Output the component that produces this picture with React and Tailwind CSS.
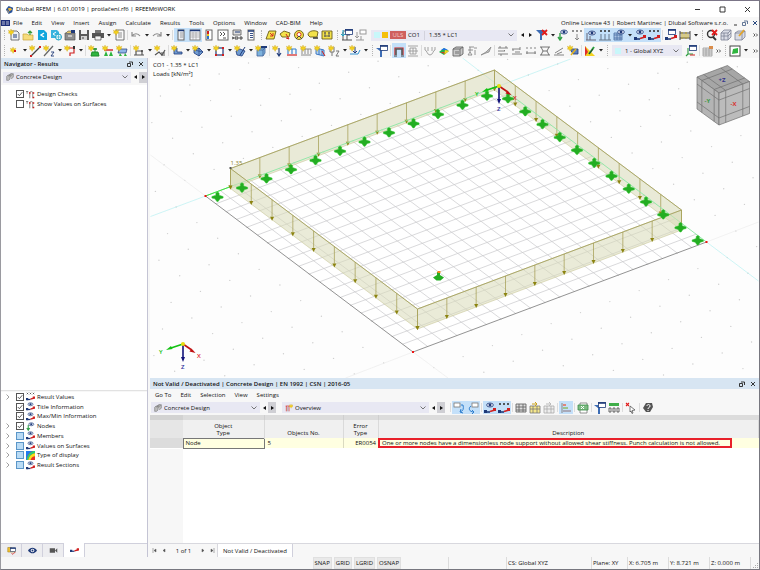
import clsx from "clsx";

const NAVY = "#1f3a78";
const RED = "#d02020";

/* ---------- Small glyph parts shared by the icons ---------- */

function Star({ x = 3, y = 3 }) {
  return (
    <path
      d={`M${x} ${y - 3}l.8 2.1 2.1-.9-.9 2 .9 .8-1.9.4-.9 2-.9-2-2-.4 1-.8-.9-2 2 .9z`}
      fill="#f4d21f"
      stroke="#c59a10"
      strokeWidth=".3"
    />
  );
}

function Eye({ x = 7, y = 3 }) {
  return (
    <g>
      <ellipse cx={x} cy={y} rx="3.4" ry="2" fill="#dfe6f5" stroke={NAVY} strokeWidth=".8" />
      <circle cx={x} cy={y} r="1.4" fill={NAVY} />
    </g>
  );
}

function Beam({ y = 9 }) {
  return (
    <g>
      <path d={`M1 ${y + 1}H6`} stroke={NAVY} strokeWidth="1.6" />
      <path d={`M6 ${y + 0.5}L11 ${y - 1}`} stroke={RED} strokeWidth="1.8" />
      <path d={`M0 ${y - 1}h3v3H0z`} fill={NAVY} />
      <path d={`M9 ${y - 3}h3v3H9z`} fill={RED} />
    </g>
  );
}

function Xxx({ y = 2, color = "#333" }) {
  return (
    <path
      d={`M1 ${y}l2 2m0-2l-2 2M5 ${y}l2 2m0-2l-2 2M9 ${y}l2 2m0-2l-2 2`}
      stroke={color}
      strokeWidth=".8"
    />
  );
}

function Window({ x = 4, y = 0 }) {
  return (
    <g>
      <rect x={x + 0.4} y={y + 0.4} width="7" height="5" fill="#fff" stroke={NAVY} strokeWidth=".8" />
      <path d={`M${x} ${y + 1}h7.8`} stroke={NAVY} strokeWidth="1.6" />
    </g>
  );
}

const ICONS = {
  newDoc: (
    <>
      <path d="M3 2h6l2 2v7H3z" fill="#eef1f5" stroke="#555" strokeWidth=".8" />
      <path d="M5 6h4M5 8h4" stroke={NAVY} />
      <Star />
    </>
  ),
  open: (
    <>
      <path d="M1 5h4l1 1h5v5H1z" fill="#f6dc7c" stroke="#c9a53a" strokeWidth=".7" />
      <path d="M8 6V2M6 4l2-2 2 2" stroke="#3b9b3b" strokeWidth="1.2" fill="none" />
    </>
  ),
  cloud: (
    <>
      <path d="M2 1h6l3 3v7H2z" fill="#12a5dc" />
      <path d="M8 4L5 6l3 2" stroke="#fff" strokeWidth="1.4" fill="none" />
    </>
  ),
  cloudGlobe: (
    <>
      <path d="M1 1h6l2 2v6H1z" fill="#38b3df" />
      <path d="M6 3L3 5l3 2" stroke="#fff" fill="none" />
      <circle cx="8.5" cy="8" r="3" fill="#e6f8fd" stroke="#1ba3c6" />
      <path d="M6 8h5M8.5 5v6" stroke="#1ba3c6" strokeWidth=".6" />
    </>
  ),
  archive: (
    <>
      <path d="M1 4h10v7H1z" fill="#8d8d8d" stroke="#555" strokeWidth=".7" />
      <path d="M2 4l2-2h5l2 2" fill="#e3c56a" stroke="#555" strokeWidth=".6" />
      <path d="M7 1h4v3H7z" fill={NAVY} />
      <path d="M4 7h4" stroke="#fff" />
    </>
  ),
  save: (
    <>
      <path d="M1 1h10v10H1z" fill="#5a5a5a" />
      <path d="M3 1h6v4H3z" fill="#f2f2f2" />
      <path d="M3 7h6v4H3z" fill="#d4d4d4" />
      <path d="M5 8v2" stroke="#444" />
    </>
  ),
  print: (
    <>
      <path d="M3 1h6v3H3z" fill="#777" />
      <path d="M0 4h12v5H0z" fill="#555" />
      <path d="M3 7h6v4H3z" fill="#f4f4f4" stroke="#444" strokeWidth=".7" />
    </>
  ),
  report: (
    <>
      <path d="M3 1h8v10H3z" fill="#fafafa" stroke="#555" strokeWidth=".8" />
      <path d="M5 4h4M5 6h4M5 8h4" stroke="#777" strokeWidth=".8" />
      <Star />
    </>
  ),
  undo: <path d="M2 3v4h4M2 7c2-3 6-3 8 0" fill="none" stroke="#8a8a8a" strokeWidth="1.2" />,
  redo: <path d="M10 3v4H6M10 7c-2-3-6-3-8 0" fill="none" stroke="#8a8a8a" strokeWidth="1.2" />,
  navigator: (
    <>
      <rect x="3" y="1" width="6" height="10" fill="#eceff5" stroke="#666" />
      <path d="M3 1.5h6" stroke={NAVY} strokeWidth="1.4" />
      <path d="M5 4h3M5 6h3M5 8h3" stroke="#888" strokeWidth=".8" />
    </>
  ),
  table: (
    <>
      <rect x="1" y="1" width="10" height="10" fill="#f5f6fa" stroke="#777" strokeWidth=".9" />
      <path d="M1 1.5h10" stroke={NAVY} strokeWidth="1.5" />
      <path d="M1 4h10M1 6h10M1 8h10M4 3v8M7 3v8" stroke="#999" strokeWidth=".6" />
    </>
  ),
  panel: (
    <>
      <rect x="3" y="1" width="6" height="10" fill="#fff" stroke="#555" strokeWidth=".9" />
      <path d="M5 2v3" stroke={RED} strokeWidth="2" />
      <path d="M5 5v2" stroke="#e8c81c" strokeWidth="2" />
      <path d="M5 7v3" stroke="#2673c9" strokeWidth="2" />
    </>
  ),
  console: (
    <>
      <rect x="1" y="1" width="10" height="10" fill="#fff" stroke="#666" />
      <path d="M3 3l2 2-2 2M6 3l2 2-2 2M6 9h3" fill="none" stroke="#444" strokeWidth=".9" />
    </>
  ),
  script: (
    <>
      <path d="M2 1h8v5H2z" fill="#ddd" stroke="#555" strokeWidth=".8" />
      <path d="M4 3h5" stroke={NAVY} />
      <path d="M1 8l2 1-2 1M4 8h3v2H4zM9 8h2v2H9z" stroke="#333" strokeWidth=".9" fill="none" />
    </>
  ),
  list: (
    <>
      <rect x="3" y="1" width="6" height="10" fill="#fff" stroke="#666" />
      <path d="M3 2h6" stroke={NAVY} strokeWidth="1.5" />
      <path d="M5 4.5h3M5 6.5h3M5 8.5h3" stroke={NAVY} strokeWidth=".9" />
    </>
  ),
  surface: (
    <>
      <path d="M4 2h7L9 10H1z" fill="#f3e24a" stroke="#6b5e1a" strokeWidth=".9" />
      <path d="M5 4l3 3M8 4v3H5" stroke={RED} strokeWidth=".9" fill="none" />
    </>
  ),
  surfaceEye: (
    <>
      <path d="M1 5l4-3 6 2-1 4H3z" fill="#f3e24a" stroke="#6b5e1a" strokeWidth=".9" />
      <path d="M7 5l3 5M10 10l-3-1" stroke={RED} />
    </>
  ),
  surfaceRound: (
    <>
      <circle cx="6" cy="6" r="4.5" fill="#f3e24a" stroke="#6b5e1a" strokeWidth=".9" />
      <circle cx="6" cy="5.5" r="2" fill="#fff" stroke={RED} strokeWidth=".9" />
      <path d="M3 10l3-3 3 3" stroke="#444" fill="none" />
    </>
  ),
  surfaceFree: (
    <>
      <path d="M1 6c0-5 8-5 10-3l-1 5H3z" fill="#f3e24a" stroke="#6b5e1a" strokeWidth=".9" />
      <path d="M6 9h5" stroke="#333" strokeWidth="1.5" />
    </>
  ),
  surfaceOpen: (
    <>
      <path d="M1 2h10v8H1z" fill="#f3e24a" stroke="#6b5e1a" strokeWidth=".9" />
      <path d="M4 3v5M8 3v5M3 7h6M3 4h2M7 4h2" stroke="#555" strokeWidth=".9" />
    </>
  ),
  load: (
    <>
      <path d="M2 3v8M2 2h4M1 11h10M6 11V6h3" stroke="#555" fill="none" />
      <path d="M2 1v6M0 5l2 2 2-2" stroke="#1ba3c6" fill="none" />
      <Window x={4} />
    </>
  ),
  loadGray: (
    <>
      <path d="M2 3v6M0 7l2 2 2-2M1 11h8M6 11V7" stroke="#999" fill="none" />
      <rect x="5" y="1" width="6" height="4" fill="#fff" stroke="#999" />
    </>
  ),
  filterOff: (
    <>
      <path d="M0 1h9L6 5v6H4V5z" fill="#3c6cb4" />
      <path d="M6 1l5 5M11 1L6 6" stroke="#e01b1b" strokeWidth="1.8" />
    </>
  ),
  eyeNode: (
    <>
      <path d="M3 4v7M1 8l2 3 2-3" stroke="#33a04a" strokeWidth="1.4" fill="none" />
      <Eye x={7} y={3} />
    </>
  ),
  xxxNode: (
    <>
      <Xxx y={1} color="#777" />
      <path d="M6 5v6M4 9l2 2 2-2" stroke="#888" fill="none" />
    </>
  ),
  eyeLoad: (
    <>
      <path d="M2 4v7M1 11h10M5 7v4" stroke="#667" fill="none" />
      <Eye x={7} y={4} />
    </>
  ),
  xxxLoad: (
    <>
      <Xxx y={1} />
      <path d="M2 5v6M6 5v6M10 5v6M0 11h12" stroke="#678" />
    </>
  ),
  eyeGrid: (
    <>
      <path d="M1 4h8v7H1zM1 6h8M1 9h8M4 4v7M7 4v7" fill="#a9c2e2" stroke="#4a6fa5" strokeWidth=".8" />
      <Eye x={8} y={3} />
    </>
  ),
  eyeBeam: (
    <>
      <Beam y={9} />
      <Eye x={6} y={3} />
    </>
  ),
  xxxBeam: (
    <>
      <Xxx y={1} />
      <Beam y={9} />
    </>
  ),
  windowBeam: (
    <>
      <Window x={3} />
      <Beam y={9} />
    </>
  ),
  dims: (
    <>
      <path d="M1 2v9M11 2v9M1 4h10M1 9h10" stroke="#444" />
      <path d="M3 3v7M5 5v4M7 3v7M9 5v4" stroke="#b59d1c" />
    </>
  ),
  zoomOff: (
    <>
      <circle cx="5" cy="5" r="3.5" fill="none" stroke="#333" strokeWidth="1.4" />
      <path d="M7 8l3 3" stroke="#333" strokeWidth="1.8" />
      <path d="M6 1l5 5M11 1L6 6" stroke="#e01b1b" strokeWidth="1.8" />
    </>
  ),
  cube: (
    <path d="M1 4l3-3h7v7l-3 3H1zM1 4h7v7M8 4l3-3M4 4v7M1 7h7l3-3" fill="#d9dce6" stroke="#7c8296" strokeWidth=".8" />
  ),
  cubePaint: (
    <>
      <path d="M1 4l3-2h7v6l-3 3H1zM1 4h7v7M8 4l3-2" fill="#d9dce6" stroke="#7c8296" strokeWidth=".8" />
      <path d="M5 7l5-6" stroke="#e3a52a" strokeWidth="1.8" />
    </>
  ),
  node: (
    <>
      <Star x={5} y={5} />
      <path d="M6 5h2v2H6z" fill={RED} />
    </>
  ),
  line: (
    <>
      <path d="M2 11L11 2" stroke="#444" strokeWidth="1.2" />
      <path d="M1 10h2v2H1zM10 1h2v2h-2z" fill={RED} />
      <Star />
    </>
  ),
  lineZ: (
    <>
      <path d="M1 11L10 1" stroke="#666" strokeWidth="1.2" />
      <path d="M8 7h3l-3 4h3" stroke={NAVY} strokeWidth=".9" fill="none" />
      <Star />
    </>
  ),
  polyline: (
    <>
      <path d="M2 3h8v5H6v3" stroke={RED} strokeWidth="1.2" fill="none" />
      <path d="M9 1h2v3H9z" fill="#333" />
      <Star />
    </>
  ),
  support: (
    <>
      <path d="M7 3v4M4 7h6l1 4H3z" stroke="#1d8c2a" fill="#2fb53f" />
      <path d="M5 4h4" stroke="#1d8c2a" strokeWidth="1.5" />
      <Star />
    </>
  ),
  supportLine: (
    <>
      <path d="M2 5h9" stroke={RED} strokeWidth="1.4" />
      <path d="M4 6l-2 5h4zM9 6l-2 5h4z" fill="#2fb53f" />
      <Star />
    </>
  ),
  supportSurf: (
    <>
      <path d="M3 4h8l-1 4H2z" fill="#8fb6e8" stroke={NAVY} strokeWidth=".7" />
      <path d="M4 8l-1 3h3zM9 8l-1 3h3z" fill="#2fb53f" />
      <Star />
    </>
  ),
  hinge: (
    <>
      <path d="M1 10h10M3 10V6h6v4" stroke="#555" fill="none" strokeWidth="1.2" />
      <circle cx="9" cy="6" r="1" fill="#444" />
      <Star />
    </>
  ),
  hingeLine: (
    <>
      <path d="M1 10l4-3 3 3 3-5" stroke="#555" fill="none" strokeWidth="1.2" />
      <path d="M8 7v4M10 7v4" stroke="#555" />
      <Star />
    </>
  ),
  member: (
    <>
      <path d="M3 3v6h8V7H6V3z" fill="#6f9bd2" stroke={NAVY} strokeWidth=".8" />
      <Star />
    </>
  ),
  solid: (
    <>
      <path d="M2 5l5-2 4 4-4 4-5-3z" fill="#6f9bd2" stroke={NAVY} strokeWidth=".8" />
      <path d="M7 3v8M2 5l9 2" stroke={NAVY} strokeWidth=".6" />
      <Star />
    </>
  ),
  opening: (
    <>
      <rect x="3" y="3" width="7" height="7" fill="#fff" stroke={NAVY} strokeWidth="1.2" />
      <path d="M2 2h2v2H2zM9 2h2v2H9zM2 9h2v2H2zM9 9h2v2H9z" fill={RED} />
      <Star />
    </>
  ),
  intersect: (
    <>
      <path d="M2 6l4-2 5 2-3 5-5-1z" fill="#6f9bd2" stroke={NAVY} strokeWidth=".8" />
      <path d="M6 10l5-8" stroke={NAVY} />
      <Star />
    </>
  ),
  blockWin: (
    <>
      <path d="M2 5h6v6H2zM2 5l2-2h6v5l-2 3M8 5l2-2" fill="#7db2dd" stroke="#44669c" strokeWidth=".8" />
      <path d="M6 1h6v2H6z" fill={NAVY} />
      <Star />
    </>
  ),
  nodalLoad: (
    <>
      <path d="M7 3v7M5 8l2 3 2-3" stroke={NAVY} strokeWidth="1.1" fill="none" />
      <Star />
    </>
  ),
  memberLoad: (
    <>
      <path d="M2 4v5M6 4v5M10 4v5M2 4h8" stroke="#2f7fcf" strokeWidth="1.1" />
      <path d="M1 10h10" stroke={RED} strokeWidth="1.2" />
      <Star />
    </>
  ),
  lineLoad: (
    <>
      <path d="M2 4v5M5 4v5M8 4v5M11 4v5M2 4h9M1 10h10" stroke="#8a8a8a" />
      <Star />
    </>
  ),
  surfLoad: (
    <>
      <path d="M2 3v6l8 2V5zM5 4v6M8 4v6" stroke="#2f6fbf" fill="#b7d3ee" strokeWidth=".9" />
      <path d="M8 6l3 5" stroke={RED} />
      <Star />
    </>
  ),
  zLoad: (
    <>
      <path d="M2 2v5h4V2M4 7v4M8 6h3l-3 5h3" stroke="#777" fill="none" />
      <Star />
    </>
  ),
  imposed: (
    <>
      <path d="M1 9h8l2-4" stroke="#2f8fd0" fill="none" />
      <path d="M6 2v6M4 6l2 2 2-2" stroke={NAVY} fill="none" />
      <Star />
    </>
  ),
  filterWin: (
    <>
      <path d="M0 3h9L6 6v6H4V6z" fill="#3c6cb4" />
      <Window x={4} />
    </>
  ),
  deformed: (
    <>
      <path d="M2 10V3h8v7" fill="none" stroke={RED} strokeWidth="1.2" />
      <path d="M3 10V4h6v6" fill="none" stroke="#555" strokeWidth="1.6" />
      <path d="M1 11h3M8 11h3" stroke="#444" />
    </>
  ),
  section: (
    <path d="M1 1h10M1 11h10M3 3h6M3 9h6M3 3v6M9 3v6M6 3v6M1 6h10" stroke="#9a9a9a" fill="none" strokeWidth=".9" />
  ),
  moment: <path d="M1 2v3c2 0 2 5 5 5s3-5 5-5V2M4 2v4M8 2v4" stroke="#999" fill="none" strokeWidth=".9" />,
  rainbow: (
    <>
      <path d="M1 7l5-4 5 3-5 4z" fill="#23b14d" />
      <path d="M3 5l3-2 4 2z" fill="#2372e8" />
      <path d="M6 10l5-4-4-1z" fill="#f5d321" />
      <path d="M2 7h4l1 2z" fill="#e03a1e" />
    </>
  ),
  solidGray: (
    <path d="M1 4l3-2h7v7l-3 2H1zM1 4h7v7M8 4l3-2M4 6v3M6 6v3" stroke="#666" fill="#c9c9c9" strokeWidth=".9" />
  ),
  reaction: <path d="M3 2h5M4 2v5M2 5h5M4 7l-2 3h4zM9 5v5M8 3h3" stroke="#888" fill="none" strokeWidth=".9" />,
  curve: <path d="M1 10l5-3 5-5-2 5-3 1z" stroke="#8a8a8a" fill="#bbb" strokeWidth=".8" />,
  forceN: <path d="M1 3h10M3 1v2M9 1v2M1 9h10M1 6h7l-1-1M4 9v2" stroke="#777" fill="none" strokeWidth=".9" />,
  forceV: <path d="M1 4h8M2 4v2M9 2v3M1 9h10M4 7h5" stroke="#777" fill="none" strokeWidth=".9" />,
  forceM: <path d="M1 3h2M5 3h2M9 3h2M1 8h10M2 6v3M10 6v3" stroke="#777" fill="none" strokeWidth=".9" />,
  forceT: <path d="M1 2h10M2 2l2 4-2 4M10 2L8 6l2 4M1 10h10M4 6h4" stroke="#666" fill="none" strokeWidth=".9" />,
  slope: <path d="M1 10h10M2 8l8-5M4 9l5-2" stroke="#777" fill="none" strokeWidth=".9" />,
  wizard: (
    <>
      <path d="M3 4h8v5H6z" fill="#5c7fc0" stroke={NAVY} strokeWidth=".8" />
      <path d="M4 10l5-6" stroke="#e3b31e" strokeWidth="1.5" />
      <Star />
    </>
  ),
  palette: (
    <>
      <path d="M1 1v10h10z" fill="#f4d21f" />
      <path d="M1 1l3 6-3 4z" fill="#e02c2c" />
      <path d="M5 9l5-7" stroke="#2b9c3f" strokeWidth="2" />
      <path d="M5 9l4-5" stroke="#222" strokeWidth=".8" />
    </>
  ),
  csys: (
    <>
      <Window x={4} />
      <path d="M3 3v6h5M3 9l-2 2" stroke="#2b9c3f" strokeWidth="1.1" fill="none" />
      <path d="M5 10h5" stroke={RED} />
    </>
  ),
  hatch: (
    <>
      <path d="M1 3h9v8H1zM1 5h9M1 7h9M1 9h9M4 3v8M7 3v8" fill="#ececec" stroke="#999" strokeWidth=".8" />
      <path d="M7 1h4v3H7z" fill="#d98c4a" />
    </>
  ),
  plane: (
    <>
      <rect x="1" y="1" width="10" height="10" fill="#fff" stroke="#444" />
      <path d="M3 9l1-5 5-1v5z" fill="#2fb53f" />
    </>
  ),
  concrete: (
    <path d="M1 5l2-2h3v6l-2 2H1zM5 3l2-2h4v5l-3 3M3 5l5-4M6 5l4-3" fill="#bdbdbd" stroke="#6a6a6a" strokeWidth=".8" />
  ),
  checks: (
    <>
      <path d="M0 2h3M1.500 2v3M5 11V3l2-1 2 1v8" stroke="#555" fill="none" strokeWidth=".9" />
      <path d="M4 3h2v2H4zM9 3h2v2H9zM9 9h2v2H9z" fill={RED} />
    </>
  ),
  overview: (
    <>
      <path d="M1 3h6M2 3v8M6 3v8" stroke={RED} fill="none" />
      <path d="M4 4v7" stroke="#999" />
      <Star x={9} y={3} />
    </>
  ),
  selIn: (
    <>
      <rect x="1" y="1" width="6" height="4" fill="#fff" stroke="#777" strokeWidth=".8" />
      <path d="M8 3h2c1 4 0 6-3 7M8 7l-1 3 3 1" stroke="#2f7fcf" fill="none" />
    </>
  ),
  selOut: (
    <>
      <rect x="5" y="1" width="6" height="4" fill="#fff" stroke="#777" strokeWidth=".8" />
      <path d="M4 4c-3 2-2 6 3 6M5 8l2 2-2 2" stroke="#2f7fcf" fill="none" />
    </>
  ),
  rows: <path d="M1 2h10v8H1zM1 5h10M1 8h10M4 2v8M8 2v8" fill="#ddd" stroke="#666" strokeWidth=".9" />,
  rowsYellow: (
    <>
      <path d="M1 4h10v7H1zM1 7h10M4 4v7M8 4v7" fill="#f7e88b" stroke="#777" strokeWidth=".8" />
      <path d="M3 2h5M6 0l2 2-2 2" stroke="#caa21a" fill="none" />
    </>
  ),
  rowsGray: (
    <>
      <path d="M1 4h10v7H1zM1 7h10M4 4v7M8 4v7" fill="#eee" stroke="#aaa" strokeWidth=".8" />
      <path d="M3 2h5M6 0l2 2-2 2" stroke="#bbb" fill="none" />
    </>
  ),
  bars: (
    <>
      <path d="M2 1v10" stroke="#888" />
      <path d="M3 2h3v2H3z" fill="#e0857a" />
      <path d="M3 5h5v2H3z" fill="#9cc48f" />
      <path d="M3 8h8v2H3z" fill="#a9a9b8" />
    </>
  ),
  excel: (
    <>
      <path d="M3 1h7v10H3z" fill="#fff" stroke="#777" strokeWidth=".8" />
      <path d="M1 3h10v5H1z" fill="#7dbb83" stroke="#3a8d48" strokeWidth=".8" />
      <path d="M4 4l3 3M7 4L4 7" stroke="#fff" />
    </>
  ),
  decimals: (
    <>
      <path d="M1 1h10v3H1z" fill="#3fae49" />
      <path d="M1 6h2v4H1zM5 6h2v4H5zM9 6h2v4H9z" stroke="#444" fill="none" strokeWidth=".8" />
    </>
  ),
  pick: (
    <>
      <path d="M1 1l3 3M4 1L1 4" stroke="#e01b1b" strokeWidth="1.1" />
      <path d="M5 4l5 4-3 .5L8 11l-1 .5-1-2.500-1 1z" fill="#fff" stroke="#555" strokeWidth=".8" />
    </>
  ),
  help: (
    <>
      <path d="M4 1h6l1 4-3 5H4L1 6z" fill="#555" />
      <path d="M5 4c0-2 3-2 3 0S6 5 6 7M6 8v1" stroke="#fff" fill="none" />
    </>
  ),
  eyeOnly: (
    <>
      <path d="M0 6c3-5 9-5 12 0-3 5-9 5-12 0z" fill={NAVY} />
      <circle cx="6" cy="6" r="2.4" fill="#fff" />
      <circle cx="6" cy="6" r="1.3" fill={NAVY} />
    </>
  ),
  camera: <path d="M1 3h7v6H1zM8 6l3-3v6z" fill="#555" />,
  project: (
    <>
      <path d="M1 2h5l1 1h4v5H1z" fill="#f2c230" stroke="#a07d13" strokeWidth=".7" />
      <Window x={4} y={2} />
      <path d="M6 10l2 1 3-3" stroke={RED} fill="none" />
    </>
  ),
  beam: <Beam y={6} />,
  display: (
    <>
      <path d="M0 0h12v12H0z" fill="#e8312a" />
      <path d="M0 0h10C4 2 2 5 1 12H0z" fill="#1f7cf0" />
      <path d="M12 0v3C7 4 4 7 3 12H1C2 5 5 2 10 0z" fill="#25d07a" />
      <path d="M12 3v4C9 7 7 9 6 12H3C4 7 7 4 12 3z" fill="#f6e11d" />
    </>
  ),
};

function Icon({ name, className = "size-3" }) {
  return (
    <svg viewBox="0 0 12 12" fill="none" aria-hidden="true" className={clsx("shrink-0", className)}>
      {ICONS[name]}
    </svg>
  );
}

/* ---------- Toolbar building blocks ---------- */

function Caret() {
  return (
    <button aria-label="More" className="flex w-[7px] shrink-0 items-center justify-center">
      <svg viewBox="0 0 4 3" className="h-[3px] w-1">
        <path d="M0 0h4L2 2.500z" fill="#222" />
      </svg>
    </button>
  );
}

function Grip() {
  return (
    <div className="flex w-[6px] shrink-0 justify-center py-[2px]">
      <div className="border-l border-dotted border-[#b5b5b5]" />
    </div>
  );
}

function Separator() {
  return (
    <div className="flex w-[3px] shrink-0 justify-center py-[2px]">
      <div className="border-l border-[#dcdcdc]" />
    </div>
  );
}

function Tool({ name, active }) {
  return (
    <button
      aria-label={name}
      className={clsx("flex w-[14px] shrink-0 items-center justify-center", active && "bg-[#c4e0f9]")}
    >
      <Icon name={name} />
    </button>
  );
}

/* "." caret, ":" grip, "|" separator, "*name" pressed button */
function Tools({ items }) {
  return items.split(" ").map((item, i) => {
    if (item === ".") return <Caret key={i} />;
    if (item === ":") return <Grip key={i} />;
    if (item === "|") return <Separator key={i} />;
    const active = item.startsWith("*");
    return <Tool key={i} name={active ? item.slice(1) : item} active={active} />;
  });
}

function MoreTools({ label, className }) {
  return (
    <button aria-label={label} className={clsx("flex w-[7px] shrink-0 items-center justify-center", className)}>
      <svg viewBox="0 0 5 4" className="h-1 w-[5px]" fill="none" stroke="#333" strokeWidth=".8">
        <path d="M.5.5L2 2 .5 3.500M3 .5L4.500 2 3 3.500" />
      </svg>
    </button>
  );
}

function Chevron() {
  return (
    <svg viewBox="0 0 6 4" className="h-1 w-[6px] shrink-0">
      <path d="M.5.5L3 3 5.500.5" fill="none" stroke="#555" strokeWidth=".8" />
    </svg>
  );
}

function Dropdown({ label, value, children, className }) {
  return (
    <div className={clsx("flex h-[11px] items-center bg-[#e8e8f3] px-[3px]", className)}>
      {children}
      <select aria-label={label} className="min-w-0 flex-1 appearance-none bg-transparent outline-none">
        <option>{value}</option>
      </select>
      <Chevron />
    </div>
  );
}

function Arrows({ plain }) {
  return (
    <div className="flex h-[11px] shrink-0">
      <button aria-label="Previous" className="flex w-2 items-center justify-center">
        <svg viewBox="0 0 3 4" className="h-1 w-[3px]">
          <path d="M3 0v4L0 2z" fill="#111" />
        </svg>
      </button>
      <button
        aria-label="Next"
        className={clsx("flex w-2 items-center justify-center", !plain && "bg-[#cfcfd4]")}
      >
        <svg viewBox="0 0 3 4" className="h-1 w-[3px]">
          <path d="M0 0v4l3-2z" fill="#111" />
        </svg>
      </button>
    </div>
  );
}

function DockButtons() {
  return (
    <div className="ml-auto flex items-center gap-[5px] pr-[3px]">
      <button aria-label="Float">
        <svg viewBox="0 0 6 6" className="size-[6px]" fill="none" stroke="#222">
          <path d="M2 1h3.500v3M.5 2.500h3v3h-3z" strokeWidth=".9" />
        </svg>
      </button>
      <button aria-label="Close">
        <svg viewBox="0 0 6 6" className="size-[6px]" stroke="#222">
          <path d="M1 1l4 4M5 1L1 5" strokeWidth=".9" />
        </svg>
      </button>
    </div>
  );
}

/* ---------- Window frame ---------- */

function TitleBar() {
  return (
    <header className="flex h-4 shrink-0 items-center bg-white pl-1">
      <svg viewBox="0 0 10 10" className="mr-[2px] size-[9px]">
        <path d="M1 5l3-4 5 2-1 5-4 2z" fill="#27519b" />
        <path d="M3 4l3-1 2 2-3 2z" fill="#e7b43c" />
        <path d="M1 5l3 5 1-3z" fill="#8a8a8a" />
      </svg>
      <h1 className="text-black">Dlubal RFEM | 6.01.0019 | protlačení.rf6 | RFEEM6WORK</h1>
      <div className="ml-auto flex items-center gap-[18px] pr-[8px]">
        <button aria-label="Minimize">
          <svg viewBox="0 0 7 7" className="size-[7px]">
            <path d="M1 3.500h5" stroke="#222" strokeWidth=".9" />
          </svg>
        </button>
        <button aria-label="Maximize">
          <svg viewBox="0 0 7 7" className="size-[7px]">
            <path d="M1 1h5v5H1z" fill="none" stroke="#222" strokeWidth=".9" />
          </svg>
        </button>
        <button aria-label="Close window">
          <svg viewBox="0 0 7 7" className="size-[7px]">
            <path d="M1 1l5 5M6 1L1 6" stroke="#222" strokeWidth=".9" />
          </svg>
        </button>
      </div>
    </header>
  );
}

const MENU = [
  "File", "Edit", "View", "Insert", "Assign", "Calculate",
  "Results", "Tools", "Options", "Window", "CAD-BIM", "Help",
];

function MenuBar() {
  return (
    <nav className="flex h-[11px] shrink-0 items-center bg-[#f7f7f7]">
      <svg viewBox="0 0 9 6" className="h-[6px] w-[9px]">
        <path d="M0 0h9v6H0z" fill="#1f2f7a" />
        <path d="M1 2h3M5 2h3M1 4h3M5 4h3" stroke="#fff" strokeWidth=".7" />
      </svg>
      <div className="flex gap-[9px] pl-[3px]">
        {MENU.map((item) => (
          <button key={item}>{item}</button>
        ))}
      </div>
      <span className="ml-auto">Online License 43 | Robert Martinec | Dlubal Software s.r.o.</span>
      <div className="flex items-center gap-1 pr-[1px] pl-1">
        <button aria-label="Minimize document">
          <svg viewBox="0 0 6 6" className="size-[6px]" stroke="#333">
            <path d="M2 5h3" />
          </svg>
        </button>
        <button aria-label="Restore document">
          <svg viewBox="0 0 6 6" className="size-[6px]" fill="none" stroke="#52698c">
            <path d="M2 1h3.500v3M.5 2.500h3v3h-3z" strokeWidth=".9" />
          </svg>
        </button>
        <button aria-label="Close document">
          <svg viewBox="0 0 6 6" className="size-[6px]" stroke="#2a4a80">
            <path d="M1 1l4 4M5 1L1 5" />
          </svg>
        </button>
      </div>
    </nav>
  );
}

function MainToolbars() {
  return (
    <div className="shrink-0 bg-[#f7f7f7]">
      <div className="flex h-[14px]">
        <Grip />
        <Tools items="newDoc open cloud cloudGlobe archive save print . report | undo . redo . | *navigator *table panel console script list : surface surfaceEye surfaceRound surfaceFree surfaceOpen : load loadGray" />
        <Dropdown label="Load combination" value="1.35 * LC1" className="mr-[1px] ml-[3px] my-auto w-[146px] gap-[2px]">
          <span className="size-[6px] bg-[#c8f7fa]" />
          <span className="size-[6px] bg-[#f5bf0a]" />
          <span className="w-4 bg-[#cf5f5f] text-center text-[#f3caca]">ULS</span>
          <span className="w-[14px]">CO1</span>
          <span className="mr-[2px] h-[9px] border-l border-[#d2d2dc]" />
        </Dropdown>
        <div className="my-auto mr-[1px]">
          <Arrows plain />
        </div>
        <Tools items="filterOff . eyeNode xxxNode *eyeLoad *xxxLoad *eyeGrid" />
        <div className="flex bg-[#c4e0f9]">
          <Caret />
        </div>
        <Tools items="*eyeBeam *xxxBeam | windowBeam dims . : zoomOff cube cubePaint" />
        <MoreTools label="More tools" className="ml-auto" />
      </div>
      <div className="mt-[1px] flex h-[15px]">
        <Grip />
        <Tools items="node . line lineZ . polyline . | support supportLine supportSurf | hinge . hingeLine | member . solid . opening . intersect . blockWin | nodalLoad memberLoad lineLoad surfLoad zLoad . imposed . : filterWin | *deformed section | moment rainbow solidGray reaction curve | forceN forceV forceM forceT slope wizard | palette . :" />
        <Dropdown label="Coordinate system" value="1 - Global XYZ" className="my-auto mx-[2px] w-[70px] gap-1">
          <span className="size-[6px] bg-[#c8f7fa]" />
        </Dropdown>
        <Tools items="csys | hatch" />
        <MoreTools label="More view tools" />
        <Tools items=": plane ." />
        <MoreTools label="More plane tools" className="ml-auto" />
      </div>
    </div>
  );
}

/* ---------- Navigator ---------- */

function Check({ label, icon, checked, partial, expandable }) {
  return (
    <label className="flex min-h-0 flex-1 items-center gap-[2px]">
      <svg viewBox="0 0 4 6" className="mr-1 h-[6px] w-1 shrink-0">
        {expandable && <path d="M.5.5L3 3 .5 5.500" fill="none" stroke="#888" strokeWidth=".8" />}
      </svg>
      <span className="grid shrink-0 place-items-center">
        <input
          type="checkbox"
          defaultChecked={checked}
          className={clsx(
            "peer col-start-1 row-start-1 size-2 appearance-none border",
            partial ? "border-[#5b96c8] bg-[#b9dbf5]" : "border-[#555] bg-white"
          )}
        />
        <svg viewBox="0 0 6 6" className="col-start-1 row-start-1 hidden size-[6px] peer-checked:block">
          <path d="M.8 3l1.600 1.700L5.300 1.200" fill="none" stroke="#333" strokeWidth=".8" />
        </svg>
      </span>
      <Icon name={icon} className="size-[9px]" />
      <span>{label}</span>
    </label>
  );
}

const RESULT_TREE = [
  { label: "Result Values", icon: "xxxBeam", checked: true, expandable: true },
  { label: "Title Information", icon: "eyeBeam", checked: true },
  { label: "Max/Min Information", icon: "eyeBeam", checked: true },
  { label: "Nodes", icon: "eyeNode", checked: true, expandable: true },
  { label: "Members", icon: "eyeBeam", partial: true, expandable: true },
  { label: "Values on Surfaces", icon: "eyeBeam", partial: true, expandable: true },
  { label: "Type of display", icon: "display", partial: true, expandable: true },
  { label: "Result Sections", icon: "eyeBeam", partial: true, expandable: true },
];

function Navigator() {
  return (
    <aside className="flex w-[147px] shrink-0 flex-col border-r border-[#c4c4d4] bg-white">
      <div className="flex h-[11px] shrink-0 items-center bg-[#d7e5f2] pl-[3px]">
        <h2 className="font-semibold">Navigator - Results</h2>
        <DockButtons />
      </div>
      <div className="flex h-4 shrink-0 items-center bg-[#f7f7f7] pl-[2px]">
        <Dropdown label="Design type" value="Concrete Design" className="flex-1 gap-[2px]">
          <Icon name="concrete" className="size-2" />
        </Dropdown>
        <Arrows />
      </div>
      <div className="flex-1 px-[5px] pt-1">
        <div className="flex h-5 flex-col">
          <Check label="Design Checks" icon="checks" checked />
          <Check label="Show Values on Surfaces" icon="checks" />
        </div>
      </div>
      <div className="h-[2px] shrink-0 border-t border-[#e2e2e2] bg-[#f7f7f7]" />
      <div className="h-[151px] shrink-0 px-[5px]">
        <div className="flex h-[78px] flex-col">
          {RESULT_TREE.map((node) => (
            <Check key={node.label} {...node} />
          ))}
        </div>
      </div>
      <div className="flex h-[14px] shrink-0 bg-[#f7f7f7]">
        {["project", "eyeOnly", "camera", "beam"].map((tab) => (
          <button
            key={tab}
            aria-label={tab}
            className={clsx(
              "flex w-[21px] items-center justify-center border-r border-[#d0d0dc]",
              tab === "beam" ? "bg-white" : "border-t bg-[#ededf0]"
            )}
          >
            <Icon name={tab} className="size-[9px]" />
          </button>
        ))}
        <div className="flex-1 border-t border-[#d0d0dc]" />
      </div>
    </aside>
  );
}

/* ---------- Model view ---------- */

const SLAB = { l: [205, 196], b: [412.5, 352], r: [706, 242], t: [498.5, 86] };
const LOAD = { l: [230, 168.5], t: [494, 70], r: [681, 210], b: [417, 309] };
const LOAD_HEIGHT = 20;

const mix = (p, q, t) => [p[0] + (q[0] - p[0]) * t, p[1] + (q[1] - p[1]) * t];
const range = (n) => Array.from({ length: n }, (_, i) => i);

function Segment({ from, to, ...rest }) {
  return <line x1={from[0]} y1={from[1]} x2={to[0]} y2={to[1]} {...rest} />;
}

function GridDots() {
  const dots = [];
  for (let i = -14; i <= 22; i++) {
    for (let j = -14; j <= 22; j++) {
      const x = 498.5 - i * 29.35 + j * 20.75;
      const y = 86 + i * 11 + j * 15.6;
      if (x > 150 && x < 757 && y > 58 && y < 376) dots.push([x, y]);
    }
  }
  return dots.map(([x, y]) => <circle key={`${x} ${y}`} cx={x} cy={y} r=".7" fill="#cfcfcf" />);
}

function LoadWall({ from, to }) {
  const down = ([x, y]) => [x, y + LOAD_HEIGHT];
  const points = [from, to, down(to), down(from)].map((p) => p.join(",")).join(" ");
  return (
    <g>
      <polygon points={points} fill="#d9dab8" fillOpacity=".55" stroke="#c9c79a" strokeWidth=".6" />
      <Segment from={from} to={to} stroke="#a5a160" strokeWidth=".9" />
      {range(10).map((i) => {
        const [x, y] = mix(from, to, i / 9);
        return (
          <g key={i}>
            <path d={`M${x} ${y}v${LOAD_HEIGHT - 3}`} stroke="#a09a4c" strokeWidth=".7" />
            <path d={`M${x - 2} ${y + LOAD_HEIGHT - 3}h4l-2 4z`} fill="#8c8410" />
          </g>
        );
      })}
    </g>
  );
}

function Support({ x, y }) {
  return (
    <path
      d={`M${x - 1.6} ${y - 4}l1.600-1 1.600 1v2.200l4 1.300v1.500l-3 .8-2 2.700h-1.200l-2-2.700-3-.8v-1.500l4-1.300z`}
      fill="#23ad22"
      stroke="#2cc42c"
      strokeWidth=".5"
    />
  );
}

function Axes({ x, y, s = 1 }) {
  return (
    <g transform={`translate(${x} ${y}) scale(${s})`} fontSize="6" fontWeight="600">
      <path d="M0 0l-12 4" stroke="#12c212" strokeWidth="1.6" />
      <path d="M-17 6l5-4 1.500 3z" fill="#12c212" />
      <path d="M0 0l8 5.500" stroke="#c01010" strokeWidth="1.6" />
      <path d="M12.500 9l-6-1.500 2-3z" fill="#c01010" />
      <path d="M0 0v13" stroke="#12127a" strokeWidth="1.6" />
      <path d="M0 18l-2-5h4z" fill="#12127a" />
      <circle r="2" fill="#e8dc10" />
      <text x="-24" y="10" fill="#12c212">Y</text>
      <text x="14" y="14" fill="#e02020">X</text>
      <text x="-2" y="25" fill="#30309a">Z</text>
    </g>
  );
}

function CubeFace({ o, u, v, fill }) {
  const at = (a, b) => [o[0] + u[0] * a + v[0] * b, o[1] + u[1] * a + v[1] * b];
  const points = [at(0, 0), at(1, 0), at(1, 1), at(0, 1)].map((p) => p.join(",")).join(" ");
  return (
    <g stroke="#707070" strokeWidth=".7">
      <polygon points={points} fill={fill} />
      {[0.22, 0.78].map((t) => (
        <g key={t}>
          <Segment from={at(t, 0)} to={at(t, 1)} />
          <Segment from={at(0, t)} to={at(1, t)} />
        </g>
      ))}
    </g>
  );
}

function ViewCube() {
  return (
    <g fontSize="6" fontWeight="700">
      <CubeFace o={[696.5, 77]} u={[22, 16]} v={[30.5, -11.5]} fill="#a6a6a6" />
      <CubeFace o={[696.5, 77]} u={[22, 16]} v={[0, 32]} fill="#b4b4b4" />
      <CubeFace o={[718.5, 93]} u={[30.5, -11.5]} v={[0, 32]} fill="#bcbcbc" />
      <text x="730" y="106" fill="#d83030">-X</text>
      <text x="704" y="103" fill="#3f9a4a">-Y</text>
      <text x="718" y="82" fill="#34348c">+Z</text>
    </g>
  );
}

function ModelScene() {
  const { l, b, r, t } = SLAB;
  return (
    <svg viewBox="150 58 608 320" className="block h-full w-full" role="img" aria-label="Slab model with surface load">
      <GridDots />
      <g strokeWidth=".7">
        <path d="M150 216.500L205 196M498.500 86L570 59M462 58L498.500 86M706 242l52 39" stroke="#b9f0f2" />
        <path d="M150 155l55 41M706 242l52-20M412.500 352L345 378M412.500 352l35 26" stroke="#ececec" />
      </g>

      {/* Slab with its line grid */}
      <polygon points={[l, b, r, t].map((p) => p.join(",")).join(" ")} fill="#fff" />
      <g stroke="#c9c9cb" strokeWidth=".7">
        {range(19).map((i) => {
          const k = (i + 1) / 20;
          return (
            <g key={i}>
              <Segment from={mix(l, b, k)} to={mix(t, r, k)} />
              <Segment from={mix(l, t, k)} to={mix(b, r, k)} />
            </g>
          );
        })}
      </g>
      <path d={`M${l}L${b}L${r}`} fill="none" stroke="#777" strokeWidth=".8" />

      <LoadWall from={LOAD.l} to={LOAD.t} />
      <LoadWall from={LOAD.t} to={LOAD.r} />
      <path d={`M${l}L${t}L${r}`} fill="none" stroke="#8be6a4" strokeWidth=".9" />
      <path d={`M${l}L${mix(l, t, 0.085)}`} stroke="#3fe23f" />
      <LoadWall from={LOAD.l} to={LOAD.b} />
      <LoadWall from={LOAD.b} to={LOAD.r} />

      {range(12).map((k) => (
        <Support key={`a${k}`} x={217 + k * 24.5} y={197 - k * 9.2} />
      ))}
      {range(12).map((k) => (
        <Support key={`b${k}`} x={507.5 + k * 17.25} y={98.5 + k * 12.9} />
      ))}

      {/* Single node support inside the slab */}
      <path d="M436.500 272h3v3l4 2.500-3.500 3h-4l-3.500-3 4-2.500z" fill="#23ad22" />
      <path d="M437 271h3v2h-3z" fill="#f08a1c" />

      {[l, b, r].map((p) => (
        <rect key={p[0]} x={p[0] - 1} y={p[1] - 1} width="2" height="2" fill="#f01414" />
      ))}
      <path d="M229 167h2v2h-2z" fill="#555" />
      <text x="230" y="165" fontSize="6" fill="#8c8430">1.35</text>

      <Axes x={498.5} y={86} />
      <Axes x={182.5} y={344} />
      <ViewCube />
    </svg>
  );
}

function ModelView() {
  return (
    <section className="relative min-h-0 flex-1 overflow-hidden bg-[#fdfdfd]">
      <ModelScene />
      <div className="absolute top-[3px] left-[3px] leading-[9px]">
        <p>CO1 - 1.35 * LC1</p>
        <p>Loads [kN/m²]</p>
      </div>
    </section>
  );
}

/* ---------- Result table ---------- */

function PagerButton({ label, d }) {
  return (
    <button aria-label={label}>
      <svg viewBox="0 0 5 5" className="size-[5px]">
        <path d={d} fill="#555" stroke="#555" strokeWidth=".5" />
      </svg>
    </button>
  );
}

function ResultTable() {
  const head = "border-r border-[#dadada] pb-[1px] align-bottom font-normal leading-[7px]";
  return (
    <table className="w-full table-fixed border-collapse">
      <colgroup>
        <col className="w-[33px]" />
        <col className="w-[81px]" />
        <col className="w-[79px]" />
        <col className="w-[35px]" />
        <col />
      </colgroup>
      <thead className="bg-[#f0f0f0]">
        <tr className="h-[5px] bg-[#dcdcdc]">
          <td className="bg-[#d2d2d2]" />
          <td className="border-r border-[#cfcfcf]" />
          <td className="border-r border-[#cfcfcf]" />
          <td className="border-r border-[#cfcfcf]" />
          <td />
        </tr>
        <tr className="h-[18px]">
          <th className="bg-[#e6e6e6]" aria-label="Row" />
          <th className={head}>Object<br />Type</th>
          <th className={head}>Objects No.</th>
          <th className={head}>Error<br />Type</th>
          <th className={head}>Description</th>
        </tr>
      </thead>
      <tbody>
        <tr className="h-[9px] bg-[#ffffe1] leading-[6px]">
          <th className="bg-[#dcdcdc]" aria-label="Row 1" />
          <td className="border border-[#777] pl-[2px]">Node</td>
          <td className="border-r border-[#dadac0] pl-[3px]">5</td>
          <td className="pr-[2px] text-right">ER0054</td>
          <td>
            <div className="mr-[27px] border-2 border-[#e8202a] pl-[2px] whitespace-nowrap">
              One or more nodes have a dimensionless node support without allowed shear stiffness. Punch
              calculation is not allowed.
            </div>
          </td>
        </tr>
      </tbody>
    </table>
  );
}

function ResultsPanel() {
  return (
    <section className="flex h-[179px] shrink-0 flex-col bg-[#f7f7f7]">
      <div className="flex h-[11px] shrink-0 items-center bg-[#d7e5f2] pl-[3px]">
        <h2 className="font-semibold">Not Valid / Deactivated | Concrete Design | EN 1992 | CSN | 2016-05</h2>
        <DockButtons />
      </div>
      <nav className="flex h-3 shrink-0 items-center gap-[9px] pl-[5px]">
        {["Go To", "Edit", "Selection", "View", "Settings"].map((item) => (
          <button key={item}>{item}</button>
        ))}
      </nav>
      <div className="flex h-[13px] shrink-0 items-center">
        <Dropdown label="Table design type" value="Concrete Design" className="ml-[1px] w-[109px] gap-[2px]">
          <Icon name="concrete" className="size-2" />
        </Dropdown>
        <Arrows />
        <Grip />
        <Dropdown label="Table" value="Overview" className="w-[147px] gap-[2px]">
          <Icon name="overview" className="size-2" />
        </Dropdown>
        <Arrows />
        <div className="flex h-full pl-1">
          <Tools items="| *selIn *selOut | *eyeBeam *xxxBeam | rows rowsYellow rowsGray | *bars | excel | filterWin decimals | pick | help" />
        </div>
      </div>
      <div className="mt-[1px] flex min-h-0 flex-1 flex-col bg-white">
        <ResultTable />
        <div className="w-[33px] flex-1 bg-[#f7f7f7]" />
      </div>
      <div className="flex h-[14px] shrink-0 border-t border-[#d8d8de]">
        <div className="flex w-[68px] items-center justify-between border-r border-[#d8d8de] px-[2px]">
          <PagerButton label="First page" d="M1 0v5M4 1v3L2 2.500z" />
          <PagerButton label="Previous page" d="M4 1v3L2 2.500z" />
          <span className="px-[6px]">1 of 1</span>
          <PagerButton label="Next page" d="M1 1v3l2-1.500z" />
          <PagerButton label="Last page" d="M4 0v5M1 1v3l2-1.500z" />
        </div>
        <button className="border-r border-[#d0d0dc] bg-white px-[5px]">Not Valid / Deactivated</button>
      </div>
    </section>
  );
}

function StatusBar() {
  const cell = "flex items-center border-l border-[#dcdcdc] pl-[1px]";
  return (
    <footer className="flex h-3 shrink-0 bg-[#f7f7f7]">
      <div className="mr-[47px] ml-auto flex gap-[2px]">
        {["SNAP", "GRID", "LGRID", "OSNAP"].map((mode) => (
          <button key={mode} className="border border-[#e0e0e0] bg-[#e9e9e9] px-[1px]">{mode}</button>
        ))}
      </div>
      <div className={clsx(cell, "w-[58px]")} />
      <div className={clsx(cell, "w-[85px]")}>CS: Global XYZ</div>
      <div className={clsx(cell, "w-9")}>Plane: XY</div>
      <div className={clsx(cell, "w-[41px]")}>X: 6.705 m</div>
      <div className={clsx(cell, "w-[41px]")}>Y: 8.721 m</div>
      <div className={clsx(cell, "w-[41px]")}>Z: 0.000 m</div>
      <div className="flex w-[9px] items-end justify-end border-l border-[#dcdcdc] p-[1px]">
        <svg viewBox="0 0 5 5" className="size-[5px]">
          <path d="M4 0h1v1H4zM4 2h1v1H4zM2 2h1v1H2zM4 4h1v1H4zM2 4h1v1H2zM0 4h1v1H0z" fill="#aaa" />
        </svg>
      </div>
    </footer>
  );
}

export default function App() {
  return (
    <div className="flex h-screen w-full flex-col overflow-hidden border border-t-[#7b7587] border-r-[#77777f] border-b-[#77777f] border-l-[#9a9aa0] bg-[#f7f7f7] font-['Open_Sans',sans-serif] text-[6px] leading-[8px] text-[#111]">
      <TitleBar />
      <MenuBar />
      <MainToolbars />
      <div className="flex min-h-0 flex-1 gap-[2px]">
        <Navigator />
        <main className="flex min-w-0 flex-1 flex-col">
          <ModelView />
          <ResultsPanel />
        </main>
      </div>
      <StatusBar />
    </div>
  );
}
